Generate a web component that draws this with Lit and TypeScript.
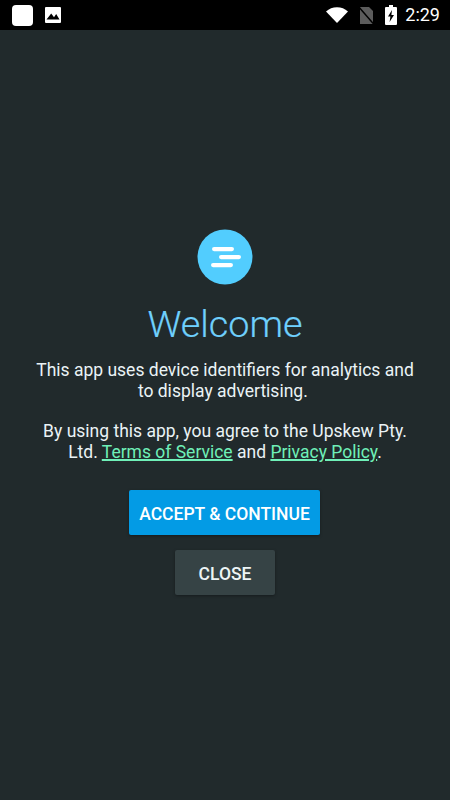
import { html, css, LitElement } from 'lit';
import { customElement } from 'lit/decorators.js';

@customElement('app-root')
export class AppRoot extends LitElement {
  static styles = css`
    :host {
      display: block;
      width: 450px;
      height: 800px;
      background: #212a2c;
      font-family: Roboto, sans-serif;
      overflow: hidden;
    }
    .status {
      height: 30px;
      background: #000;
      display: flex;
      align-items: center;
      padding: 0 10px 0 12px;
      color: #fff;
    }
    .status svg {
      display: block;
    }
    .note-icon {
      width: 21px;
      height: 21px;
      border-radius: 4px;
      background: #fff;
      margin-right: 11px;
    }
    .spacer {
      flex: 1;
    }
    .wifi {
      margin-right: 8px;
    }
    .sim {
      margin-right: 10px;
    }
    .clock {
      font-size: 18px;
      margin-left: 8px;
      line-height: 30px;
    }
    .main {
      display: flex;
      flex-direction: column;
      align-items: center;
      padding-top: 199px;
    }
    .logo {
      width: 56px;
      height: 56px;
      display: block;
    }
    h1 {
      margin: 15px 0 0;
      font-size: 37.8px;
      font-weight: 300;
      line-height: 48px;
      color: #6fd0fd;
      -webkit-text-stroke: 0.2px #6fd0fd;
    }
    p {
      margin: 0;
      width: 392px;
      text-align: center;
      font-size: 17.5px;
      line-height: 21px;
      color: #eaf3f6;
    }
    .intro {
      margin-top: 12px;
    }
    .terms {
      margin-top: 19px;
    }
    a {
      color: #6ff0b8;
      text-decoration: underline;
      text-decoration-thickness: 1.5px;
    }
    button {
      display: block;
      border: 0;
      border-radius: 2px;
      font-family: inherit;
      font-size: 17.5px;
      font-weight: 500;
      height: 45px;
      padding: 2px 0 0;
      color: #eef5f6;
      box-shadow: 0 1px 3px rgba(0, 0, 0, 0.35);
    }
    .accept {
      margin: 27px 1px 0 0;
      width: 191px;
      background: #039be5;
      color: #fff;
    }
    .close {
      margin-top: 15px;
      width: 100px;
      background: #364345;
    }
  `;

  render() {
    return html`
      <div class="status">
        <div class="note-icon"></div>
        <svg width="18" height="18" viewBox="0 0 18 18">
          <path fill="#fff" fill-rule="evenodd" d="M2 1h14a1 1 0 0 1 1 1v14a1 1 0 0 1-1 1H2a1 1 0 0 1-1-1V2a1 1 0 0 1 1-1zM2.5 13.5h13L12.2 8 10 11.2 7.2 7.6z" />
        </svg>
        <div class="spacer"></div>
        <svg class="wifi" width="24" height="18" viewBox="0 0 24 18">
          <path fill="#fff" d="M12 17 1 5.4C4 2.8 7.8 1.2 12 1.2s8 1.6 11 4.2z" />
        </svg>
        <svg class="sim" width="18" height="20" viewBox="0 0 18 20">
          <path fill="#5c5c5c" d="M3 2h9l4 4v13H3z" />
          <path stroke="#000" stroke-width="1.5" d="M1 1 17.5 20" />
        </svg>
        <svg width="12" height="20" viewBox="0 0 12 20">
          <path fill="#fff" fill-rule="evenodd" d="M4 0h4v2h3a1 1 0 0 1 1 1v16a1 1 0 0 1-1 1H1a1 1 0 0 1-1-1V3a1 1 0 0 1 1-1h3zM7 5 3 11.5h2.4L4.6 17 9 10H6.4z" />
        </svg>
        <span class="clock">2:29</span>
      </div>
      <div class="main">
        <svg class="logo" viewBox="0 0 56 56">
          <circle cx="28" cy="28" r="27.5" fill="#52cdfe" />
          <rect x="15" y="18" width="22" height="4.2" rx="2.1" fill="#fff" />
          <rect x="22" y="26" width="22" height="4.2" rx="2.1" fill="#fff" />
          <rect x="14" y="34" width="22" height="4.2" rx="2.1" fill="#fff" />
        </svg>
        <h1>Welcome</h1>
        <p class="intro">This app uses device identifiers for analytics and to display advertising.&nbsp;</p>
        <p class="terms">
          <span>By using this app, you agree to the Upskew Pty.</span>
          <span>Ltd.</span>
          <a href="#">Terms of Service</a> <span>and</span> <a href="#">Privacy Policy</a><span>.</span>
        </p>
        <button class="accept">ACCEPT &amp; CONTINUE</button>
        <button class="close">CLOSE</button>
      </div>
    `;
  }
}
